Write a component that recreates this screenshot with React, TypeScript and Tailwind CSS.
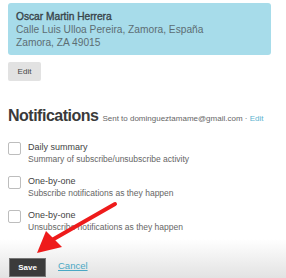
const options = [
  { label: 'Daily summary', desc: 'Summary of subscribe/unsubscribe activity' },
  { label: 'One-by-one', desc: 'Subscribe notifications as they happen' },
  { label: 'One-by-one', desc: 'Unsubscribe notifications as they happen' },
];

export default function App() {
  return (
    <div className="relative w-[286px] h-[278px] overflow-hidden bg-white font-['Liberation_Sans',Arial,sans-serif]">
      <div className="pl-2 pt-[3px]">
        {/* Address card */}
        <div className="w-[263px] rounded-[3px] bg-[#a7dcea] px-2 pt-[7px] pb-[6px] text-[10.2px] leading-[13px] text-[#5d6d73]">
          <div className="text-[#39454a] [-webkit-text-stroke:0.35px_#39454a]">Oscar Martin Herrera</div>
          <div>Calle Luis Ulloa Pereira, Zamora, España</div>
          <div>Zamora, ZA 49015</div>
        </div>

        <button className="mt-[7px] h-[19px] w-[33px] rounded-[2px] bg-[#e2e2e2] text-[8px] text-[#444]">
          Edit
        </button>

        {/* Notifications */}
        <div className="mt-[25px] flex items-baseline gap-[4px] leading-[20px]">
          <h2 className="text-[16px] font-bold tracking-[-0.5px] text-[#3a3a3a]">Notifications</h2>
          <span className="text-[8px] text-[#666]">
            Sent to domingueztamame@gmail.com · <span className="text-[#5bb3cf]">Edit</span>
          </span>
        </div>

        <div className="mt-[12px] flex flex-col gap-[10px]">
          {options.map((o, i) => (
            <div key={i} className="flex gap-[7px]">
              <div className="mt-[1px] h-[13px] w-[13px] rounded-[2px] border border-[#bdbdbd] bg-white" />
              <div className="text-[9px] leading-[12px]">
                <div className="text-[#444]">{o.label}</div>
                <div className="text-[8.5px] text-[#666]">{o.desc}</div>
              </div>
            </div>
          ))}
        </div>
      </div>

      {/* Footer */}
      <div className="mt-[6px] flex h-[40px] items-end gap-[12px] bg-gradient-to-b from-white to-[#e2e2e2] pb-[2px] pl-[9px]">
        <button className="h-[19px] w-[37px] border border-[#777] bg-[#3b3b3b] text-[8px] font-bold text-white">
          Save
        </button>
        <span className="mb-[4px] text-[9.5px] text-[#4aa8c4] underline">Cancel</span>
      </div>

      {/* Red annotation arrow */}
      <svg className="absolute inset-0" width="286" height="278" viewBox="0 0 286 278">
        <line x1="115" y1="204" x2="52" y2="240" stroke="#ee1b1b" strokeWidth="4" strokeLinecap="round" />
        <polygon points="37,253 46,231 62,247" fill="#ee1b1b" />
      </svg>
    </div>
  );
}
